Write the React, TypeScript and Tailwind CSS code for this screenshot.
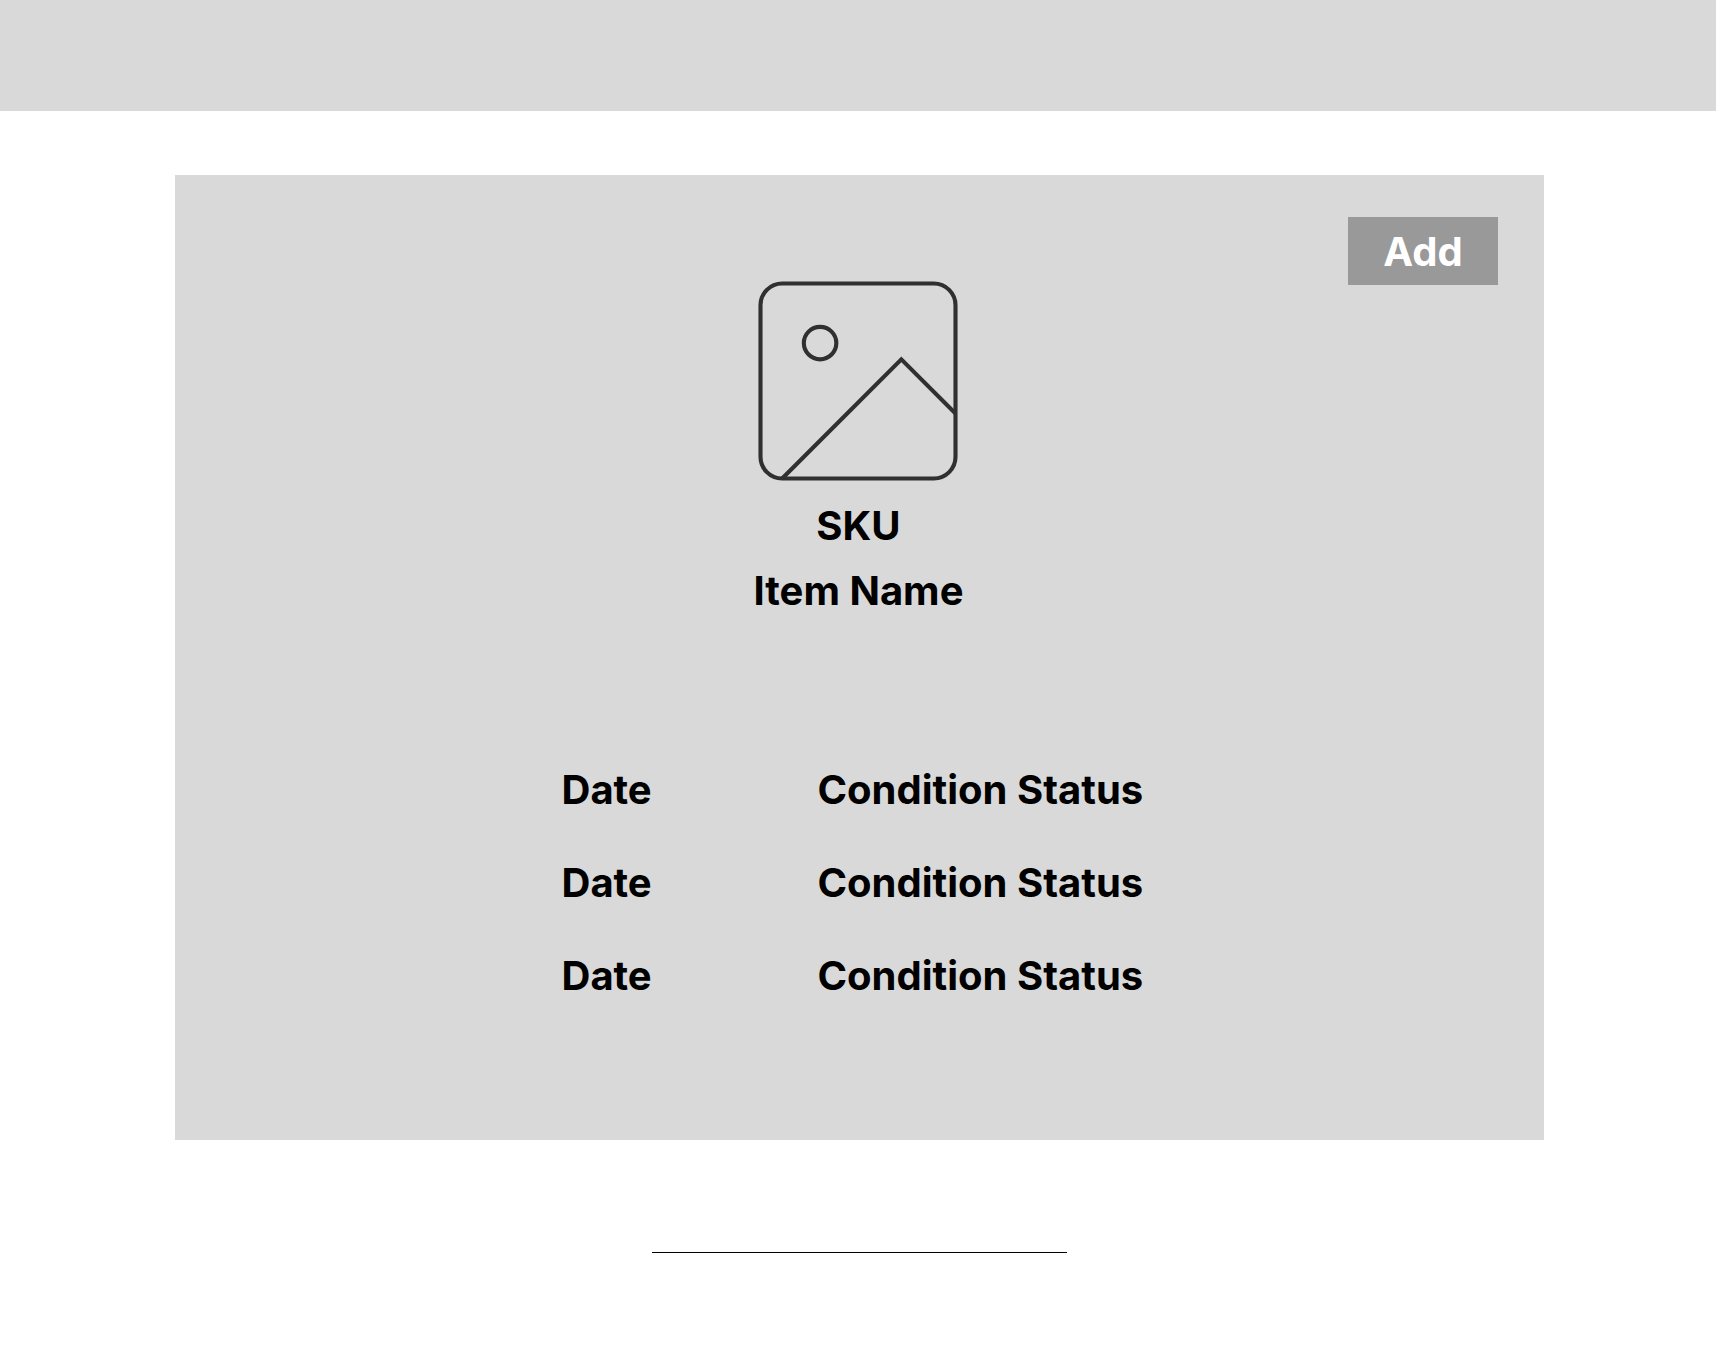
const records = [
  { id: 1, date: "Date", status: "Condition Status" },
  { id: 2, date: "Date", status: "Condition Status" },
  { id: 3, date: "Date", status: "Condition Status" },
];

function PictureIcon() {
  return (
    <svg
      className="size-[208px]"
      viewBox="2.4 2.4 19.2 19.2"
      fill="none"
      stroke="#303030"
      strokeWidth="0.38"
      role="img"
      aria-label="Item picture"
    >
      <rect x="3" y="3" width="18" height="18" rx="2" />
      <circle cx="8.5" cy="8.5" r="1.5" />
      <path d="M5 21L16 10L21 15" />
    </svg>
  );
}

export default function App() {
  return (
    <div className="min-h-screen bg-white font-['Inter',sans-serif] text-[40px] leading-[48px] font-bold text-black">
      <header className="h-[111px] bg-[#d9d9d9]" />
      <main className="mt-16 mr-[172px] ml-[175px]">
        <section className="bg-[#d9d9d9] pt-[42px] pr-[46px] pb-[118px] pl-11">
          <div className="grid grid-cols-[1fr_auto_1fr] items-start">
            <div className="col-start-2 flex flex-col items-center pt-[60px]">
              <PictureIcon />
              <h2 className="mt-[17px]">SKU</h2>
              <h1 className="mt-[17px]">Item Name</h1>
            </div>
            <button
              type="button"
              className="h-[68px] w-[150px] justify-self-end bg-[#999999] pt-0.5 text-white"
            >
              Add
            </button>
          </div>
          <table className="mx-auto mt-32 w-[594px] table-fixed text-left">
            <tbody>
              {records.map((record) => (
                <tr key={record.id} className="h-[93px]">
                  <td className="w-[256px] p-0">{record.date}</td>
                  <td className="p-0 whitespace-nowrap">{record.status}</td>
                </tr>
              ))}
            </tbody>
          </table>
        </section>
        <hr className="mx-auto mt-28 w-[415px] border-t border-black" />
      </main>
    </div>
  );
}
